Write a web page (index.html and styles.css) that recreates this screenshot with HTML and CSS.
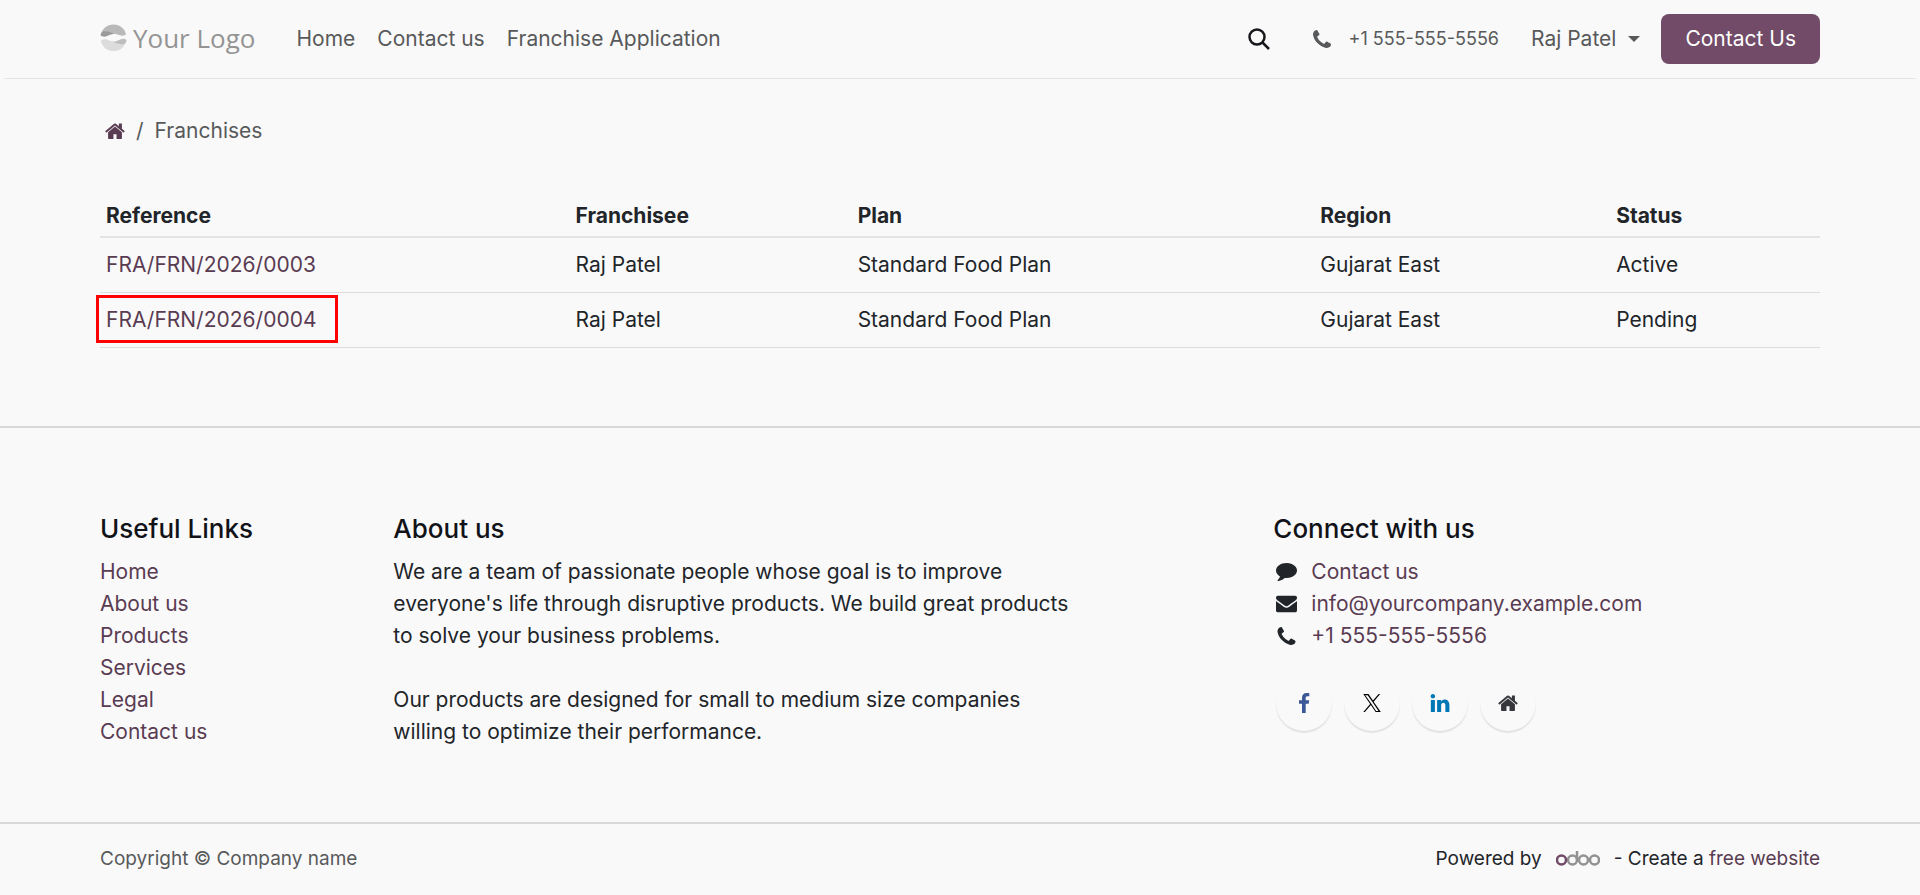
FILE: index.html
```html
<!DOCTYPE html>
<html lang="en">
<head>
    <meta charset="UTF-8">
    <meta name="viewport" content="width=device-width, initial-scale=1.0">
    <title>Franchises</title>
    <link rel="stylesheet" href="styles.css">
</head>
<body>
    <!-- shared icons -->
    <svg class="sprite" aria-hidden="true">
        <symbol id="icon-home" viewBox="0 0 1664 1312">
            <path d="M1408 768v480q0 26-19 45t-45 19H960V928H704v384H320q-26 0-45-19t-19-45V768q0-1 .5-3t.5-3l575-474 575 474q1 2 1 6zm223-69l-62 74q-8 9-21 11h-3q-13 0-21-7L832 200 140 777q-12 8-24 7-13-2-21-11l-62-74q-8-10-7-23.500t11-21.500L756 55q32-26 76-26t76 26l244 204V64q0-14 9-23t23-9h192q14 0 23 9t9 23v408l219 182q10 8 11 21.500t-7 23.500z"/>
        </symbol>
        <symbol id="icon-phone" viewBox="0 0 1408 1408">
            <path d="M1408 1112q0 27-10 70.500t-21 68.500q-21 50-122 106-94 51-186 51-27 0-53-3.500t-57.500-12.500-47-14.500T856 1357t-49-18q-98-35-175-83-127-79-264-216T152 776q-48-77-83-175-3-9-18-49t-20.500-55.500-14.500-47T3.500 392 0 339q0-92 51-186Q107 52 157 31q25-11 68.500-21T296 0q14 0 21 3 18 6 53 76 11 19 30 54t35 63.500 31 53.500q3 4 17.500 25t21.500 35.500 7 28.500q0 20-28.500 50T421 444t-62 53-29 46q0 9 5 22.500t8.500 20.500 14 24 11.500 19q76 137 174 235t235 174q2 1 19 11.500t24 14 20.500 8.500 22.500 5q18 0 46-29t53-62 55-62.500 50-28.500q14 0 28.500 7t35.500 21.500 25 17.500q25 15 53.500 31t63.500 35 54 30q70 35 76 53 3 7 3 21z"/>
        </symbol>
    </svg>

    <header class="site-header">
        <nav class="container navbar" aria-label="Main">
            <a class="logo" href="#">
                <svg viewBox="0 0 28 28" aria-hidden="true">
                    <path fill="#b9b9b9" d="M1 11C2 5 7 .500 14 .500S26 5 27 11c-3 2-6 1-9 0-5-2-8-1-11 .500-2 1-4 1-6-.500z"/>
                    <path fill="#9a9a9a" d="M.500 12c0-3 2-5 6-4.500 3 .300 5 1.500 9 2.500-3 0-5 1-7.500 2.200-3 1.300-5 1.300-7.500-.200z"/>
                    <path fill="#dcdcdc" d="M.800 17c3-2 6-1 9 0 5 2 8 1 11-.500 2-1 4-1 6.500.500C26 23.500 21 28 14 28S2 23.500.800 17z"/>
                    <path fill="#bdbdbd" d="M27.500 16.500c0 3-2 5-6 4.500-3-.300-5-1.500-8.500-2.500 3 0 5-1 7.500-2.200 3-1.300 5-1.300 7 .200z"/>
                </svg>
                <span>Your Logo</span>
            </a>
            <ul class="menu">
                <li><a href="#">Home</a></li>
                <li><a href="#">Contact us</a></li>
                <li><a href="#">Franchise Application</a></li>
            </ul>
            <button class="search" type="button" aria-label="Search">
                <svg viewBox="0 0 22 22" aria-hidden="true"><circle cx="9" cy="9" r="7.500"/><path d="M14.500 14.500L21 21"/></svg>
            </button>
            <a class="phone" href="tel:+15555555556">
                <svg aria-hidden="true"><use href="#icon-phone"/></svg>
                <span>+1 555-555-5556</span>
            </a>
            <button class="user" type="button">Raj Patel</button>
            <a class="cta" href="#">Contact Us</a>
        </nav>
    </header>

    <main class="container">
        <ol class="breadcrumb">
            <li><a href="#" aria-label="Home"><svg aria-hidden="true"><use href="#icon-home"/></svg></a></li>
            <li>Franchises</li>
        </ol>
        <table class="franchises">
            <thead>
                <tr>
                    <th class="col-reference">Reference</th>
                    <th class="col-franchisee">Franchisee</th>
                    <th class="col-plan">Plan</th>
                    <th class="col-region">Region</th>
                    <th>Status</th>
                </tr>
            </thead>
            <tbody>
                <tr>
                    <td><a href="#">FRA/FRN/2026/0003</a></td>
                    <td>Raj Patel</td>
                    <td>Standard Food Plan</td>
                    <td>Gujarat East</td>
                    <td>Active</td>
                </tr>
                <tr>
                    <td><a class="highlight" href="#">FRA/FRN/2026/0004</a></td>
                    <td>Raj Patel</td>
                    <td>Standard Food Plan</td>
                    <td>Gujarat East</td>
                    <td>Pending</td>
                </tr>
            </tbody>
        </table>
    </main>

    <footer class="site-footer">
        <div class="container footer-columns">
            <section class="footer-links">
                <h5>Useful Links</h5>
                <ul>
                    <li><a href="#">Home</a></li>
                    <li><a href="#">About us</a></li>
                    <li><a href="#">Products</a></li>
                    <li><a href="#">Services</a></li>
                    <li><a href="#">Legal</a></li>
                    <li><a href="#">Contact us</a></li>
                </ul>
            </section>
            <section class="footer-about">
                <h5>About us</h5>
                <p>We are a team of passionate people whose goal is to improve everyone's life through disruptive products. We build great products to solve your business problems.</p>
                <p>Our products are designed for small to medium size companies willing to optimize their performance.</p>
            </section>
            <section class="footer-connect">
                <h5>Connect with us</h5>
                <ul class="contacts">
                    <li>
                        <svg viewBox="0 0 1792 1536" aria-hidden="true"><path d="M1792 640q0 174-120 321.500T1346 1195t-450 86q-70 0-145-8-198 175-460 242-49 14-114 22-17 2-30.500-9T129 1499v-1q-3-4-.500-12t2-10 4.500-9.500l6-9 7-8.500 8-9q7-8 31-34.500t34.500-38 31-39.500 32.500-51 27-59 26-76q-157-89-247.500-220T0 640q0-130 71-248.500T262 187t286-136.500T896 0q244 0 450 85.500T1672 319t120 321z"/></svg>
                        <a href="#">Contact us</a>
                    </li>
                    <li>
                        <svg viewBox="0 0 1792 1408" aria-hidden="true"><path d="M1792 454v794q0 66-47 113t-113 47H160q-66 0-113-47T0 1248V454q44 49 101 87 362 246 497 345 57 42 92.500 65.500t94.500 48 110 24.500h2q51 0 110-24.500t94.500-48T1194 886q170-123 498-345 57-39 100-87zm0-294q0 79-49 151t-122 123q-376 261-468 325-10 7-42.500 30.500t-54 38-52 32.500-57.500 27-50 9h-2q-23 0-50-9t-57.500-27-52-32.500-54-38T639 759q-91-64-262-182.500T172 434q-62-42-117-115.500T0 182Q0 104 41.500 52T160 0h1472q65 0 112.500 47t47.500 113z"/></svg>
                        <a href="#">info@yourcompany.example.com</a>
                    </li>
                    <li>
                        <svg class="small" aria-hidden="true"><use href="#icon-phone"/></svg>
                        <a href="tel:+15555555556">+1 555-555-5556</a>
                    </li>
                </ul>
                <div class="social">
                    <a class="facebook" href="#" aria-label="Facebook"><svg viewBox="0 0 11 20" aria-hidden="true"><path d="M10.800.200v3.100H8.900C7.500 3.300 7.200 4 7.200 5v2.300h3.500l-.500 3.500h-3V20H3.500v-9.200h-3V7.300h3V4.700C3.500 1.700 5.400 0 8.100 0c1.300 0 2.400.100 2.700.200z"/></svg></a>
                    <a class="twitter" href="#" aria-label="X"><svg viewBox="0 0 24 24" aria-hidden="true"><path d="M14.200 10.200L22.900 0h-2.100l-7.500 8.800L7.300 0H.400l9.100 13.300L.400 24h2.100l8-9.300 6.400 9.300h6.900zM11.300 13.400l-.900-1.300L3 1.600h3.200l5.900 8.500.900 1.300 7.700 11.100h-3.200z"/></svg></a>
                    <a class="linkedin" href="#" aria-label="LinkedIn"><svg viewBox="0 0 1536 1472" aria-hidden="true"><path d="M349 481v991H19V481zm21-306q1 73-50.500 122T184 346h-2q-82 0-132-49T0 175q0-74 51.500-122.500T186 4t133 48.500T370 175zm1166 729v568h-329V942q0-105-40.500-164.500T1040 718q-63 0-105.500 34.500T871 838q-11 30-11 81v553H531q2-399 2-647t-1-296l-1-48h329v144h-2q20-32 41-56t56.500-52 87-43.500T1157 458q171 0 275 113.500T1536 904z"/></svg></a>
                    <a class="home" href="#" aria-label="Home"><svg aria-hidden="true"><use href="#icon-home"/></svg></a>
                </div>
            </section>
        </div>
        <div class="copyright">
            <div class="container">
                <span class="company">Copyright © Company name</span>
                <div class="powered">
                    <span>Powered by</span>
                    <a class="odoo" href="#" aria-label="Odoo">
                        <svg viewBox="0 0 44 16" aria-hidden="true">
                            <circle cx="16.500" cy="9" r="4.500"/>
                            <path d="M21 0v9"/>
                            <circle cx="27.500" cy="9" r="4.500"/>
                            <circle cx="38.500" cy="9" r="4.500"/>
                            <circle class="first" cx="5.500" cy="9" r="4.500"/>
                        </svg>
                    </a>
                    <span>- Create a <a href="#">free website</a></span>
                </div>
            </div>
        </div>
    </footer>
</body>
</html>
```
FILE: styles.css
```css
* {
    box-sizing: border-box;
}
body {
    margin: 0;
    background-color: #f9f9f9;
    color: #212529;
    font-family: Inter, "Liberation Sans", sans-serif;
    font-size: 21px;
    line-height: 32px;
}
a {
    color: #5a3c52;
    text-decoration: none;
}
a:hover {
    text-decoration: underline;
}
button {
    padding: 0;
    border: none;
    background: none;
    font: inherit;
    cursor: pointer;
}
ul,
ol {
    margin: 0;
    padding: 0;
    list-style: none;
}
svg {
    display: block;
    fill: currentColor;
}
.sprite {
    display: none;
}
.container {
    padding: 0 100px;
}

/* header */
.site-header {
    margin: 0 4px;
    border-bottom: 1px solid #e4e4e4;
}
.navbar {
    display: flex;
    align-items: center;
    height: 78px;
    padding: 0 96px;
    color: #58595b;
}
.navbar a,
.navbar button {
    color: inherit;
}
.logo {
    display: flex;
    align-items: center;
    gap: 6px;
    margin-right: 41px;
    padding-bottom: 3px;
    font-family: "Open Sans", "Noto Sans", sans-serif;
    font-size: 26px;
}
.logo svg {
    width: 27px;
    height: 27px;
}
.logo span {
    color: #949494;
}
.menu {
    display: flex;
    gap: 22px;
    margin-right: auto;
}
.navbar .search {
    margin-right: 43px;
    color: #17181c;
}
.search svg {
    width: 22px;
    height: 22px;
    fill: none;
    stroke: currentColor;
    stroke-width: 2.500;
}
.phone {
    display: flex;
    align-items: center;
    gap: 18px;
    margin-right: 32px;
    font-size: 18px;
}
.phone svg {
    width: 18px;
    height: 18px;
}
.user {
    display: flex;
    align-items: center;
    gap: 12px;
    margin-right: 21px;
}
.user::after {
    content: "";
    border-top: 6px solid;
    border-left: 6px solid transparent;
    border-right: 6px solid transparent;
}
.navbar .cta {
    padding: 9px 24px;
    border-radius: 8px;
    background-color: #714b67;
    color: #fff;
}

/* franchise list */
.breadcrumb {
    display: flex;
    gap: 11px;
    padding: 36px 5px 48px;
    color: #58595b;
}
.breadcrumb li {
    display: flex;
    align-items: center;
    gap: 11px;
}
.breadcrumb li + li::before {
    content: "/";
}
.breadcrumb svg {
    width: 20px;
    height: 16px;
}
.franchises {
    width: 100%;
    margin-bottom: 78px;
    border-collapse: collapse;
    table-layout: fixed;
}
.franchises th,
.franchises td {
    padding: 11px 6px;
    border-bottom: 1px solid #dcdcdc;
    text-align: left;
}
.franchises th {
    padding: 5px 6px 4px;
    border-bottom: 2px solid #e4e4e4;
    font-weight: 700;
}
.col-reference {
    width: 27.3%;
}
.col-franchisee {
    width: 16.4%;
}
.col-plan {
    width: 26.9%;
}
.col-region {
    width: 17.2%;
}
.highlight {
    position: relative;
    display: block;
    width: max-content;
}
.highlight::before {
    content: "";
    position: absolute;
    inset: -9px -22px -7px -10px;
    border: 3px solid #ff0000;
}

/* footer */
.site-footer {
    border-top: 2px solid #d9d9d9;
}
.footer-columns {
    display: grid;
    grid-template-columns: repeat(12, 1fr);
    column-gap: 40px;
    padding-top: 85px;
    padding-bottom: 74px;
}
.footer-links {
    grid-column: span 2;
}
.footer-about {
    grid-column: span 5;
}
.footer-connect {
    grid-column: 9 / span 4;
}
.site-footer h5 {
    margin: 0 0 11px;
    color: #111318;
    font-size: 26px;
    font-weight: 500;
    line-height: 32px;
}
.footer-about p {
    margin: 0 0 32px;
}
.footer-about p:last-child {
    margin-bottom: 0;
}
.contacts li {
    display: flex;
    align-items: center;
}
.contacts svg {
    width: 27px;
    height: 20px;
    padding: 0 3px;
    margin-right: 11px;
}
.contacts .small {
    padding: 1px 3px;
}
.social {
    display: flex;
    gap: 12px;
    margin-top: 23px;
    padding: 0 3px;
}
.social a {
    display: flex;
    align-items: center;
    justify-content: center;
    width: 56px;
    height: 56px;
    border-radius: 50%;
    box-shadow: 0 2px 1px #e2e2e2;
    color: #35373b;
}
.social svg {
    width: 20px;
    height: 18px;
}
.social .facebook {
    color: #3b5998;
}
.social .facebook svg {
    height: 20px;
}
.social .twitter {
    color: #000;
}
.social .linkedin {
    color: #0077b5;
}
.copyright {
    border-top: 2px solid #d9d9d9;
    font-size: 19px;
}
.copyright .container {
    display: flex;
    justify-content: space-between;
    padding-top: 19px;
    padding-bottom: 19px;
}
.company {
    color: #58595b;
}
.powered {
    display: flex;
    align-items: center;
    gap: 14px;
}
.odoo svg {
    width: 44px;
    height: 16px;
    fill: none;
    stroke: #929292;
    stroke-width: 2.500;
}
.odoo .first {
    stroke: #714b67;
}
```
